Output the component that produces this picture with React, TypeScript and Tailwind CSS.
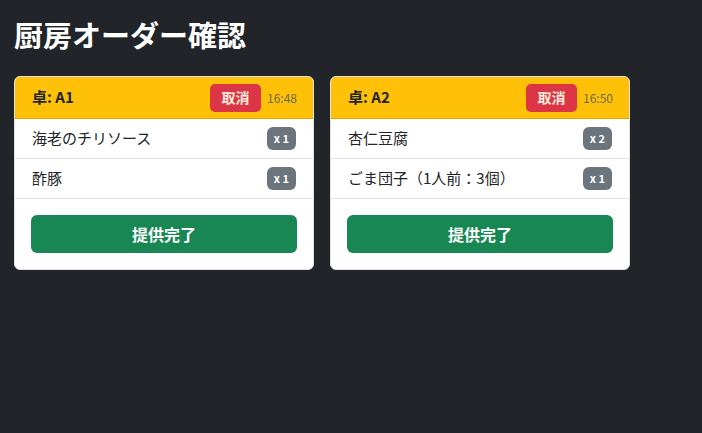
import React from 'react';

type Item = {
  name: string;
  qty: number;
};

type Order = {
  table: string;
  time: string;
  items: Item[];
};

const orders: Order[] = [
  {
    table: 'A1',
    time: '16:48',
    items: [
      { name: '海老のチリソース', qty: 1 },
      { name: '酢豚', qty: 1 },
    ],
  },
  {
    table: 'A2',
    time: '16:50',
    items: [
      { name: '杏仁豆腐', qty: 2 },
      { name: 'ごま団子（1人前：3個）', qty: 1 },
    ],
  },
];

const font = "font-['Noto_Sans_CJK_JP','Noto_Sans',sans-serif] [font-feature-settings:'pkna']";

const OrderCard: React.FC<{ order: Order }> = ({ order }) => {
  return (
    <div className="w-[300px] bg-white rounded-[6px] border border-[#dee2e6] overflow-hidden">
      <div className="h-[42px] bg-[#ffc107] border-b border-[#e0a800] flex items-center justify-between pl-[17px] pr-[16px]">
        <span className="text-[15px] font-bold text-[#212529]">卓: {order.table}</span>
        <div className="flex items-center gap-[6px]">
          <button className="h-[28px] w-[51px] rounded-[5px] bg-[#dc3545] text-[#ffeedd] text-[14px] font-bold flex items-center justify-center">
            取消
          </button>
          <span className="text-[12px] text-[#6c6a4a]">{order.time}</span>
        </div>
      </div>
      {order.items.map((item) => (
        <div
          key={item.name}
          className="h-[40px] border-b border-[#dee2e6] flex items-center justify-between pl-[17px] pr-[17px]"
        >
          <span className="text-[15px] text-[#212529]">{item.name}</span>
          <span className="h-[23px] px-[7px] rounded-[6px] bg-[#6c757d] text-white text-[11px] font-bold flex items-center">
            x {item.qty}
          </span>
        </div>
      ))}
      <div className="p-[16px]">
        <button className="w-full h-[38px] rounded-[6px] bg-[#198754] text-white text-[16px] font-bold">
          提供完了
        </button>
      </div>
    </div>
  );
};

export default function App() {
  return (
    <div className={`min-h-[433px] bg-[#212529] px-[14px] pt-[14px] ${font}`}>
      <h1 className="text-[29px] font-bold text-white leading-[40px] mb-[22px]">厨房オーダー確認</h1>
      <div className="flex gap-[16px] items-start">
        {orders.map((order) => (
          <OrderCard key={order.table} order={order} />
        ))}
      </div>
    </div>
  );
}
